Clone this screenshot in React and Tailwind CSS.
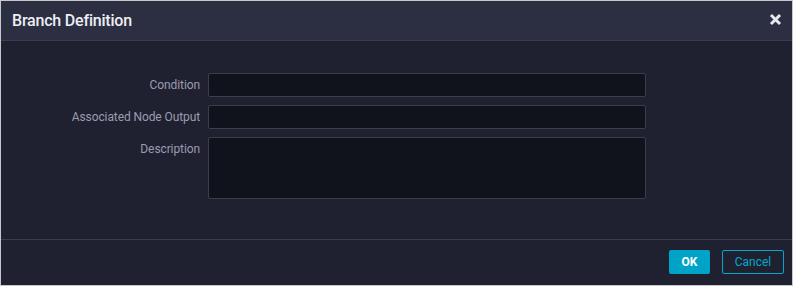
import React from "react";

export default function App() {
  return (
    <div className="w-[793px] h-[286px] border border-[#c8c8cc] bg-[#202130] flex flex-col" style={{ fontFamily: "Roboto, 'Liberation Sans', sans-serif" }}>
      <div className="h-[40px] shrink-0 bg-[#2c2f41] border-b border-[#3a3c50] flex items-center justify-between pl-[11px] pr-[10px]">
        <span className="text-[16px] font-medium text-[#eceef4] tracking-[-0.2px]">Branch Definition</span>
        <svg width="13" height="13" viewBox="0 0 13 13" className="mt-[-2px]">
          <path d="M2 2 L11 11 M11 2 L2 11" stroke="#e6e8f0" strokeWidth="3" strokeLinecap="butt" />
        </svg>
      </div>
      <div className="flex-1 flex flex-col gap-[8px] pt-[32px]">
        <div className="flex items-center gap-[8px]">
          <label className="w-[199px] text-right text-[12px] text-[#9a9cb0] tracking-[-0.1px]">Condition</label>
          <div className="w-[438px] h-[24px] bg-[#11131c] border border-[#3b3d51] rounded-[2px]" />
        </div>
        <div className="flex items-center gap-[8px]">
          <label className="w-[199px] text-right text-[12px] text-[#9a9cb0] tracking-[-0.1px]">Associated Node Output</label>
          <div className="w-[438px] h-[24px] bg-[#11131c] border border-[#3b3d51] rounded-[2px]" />
        </div>
        <div className="flex items-start gap-[8px]">
          <label className="w-[199px] text-right text-[12px] text-[#9a9cb0] tracking-[-0.1px] pt-[3px]">Description</label>
          <div className="w-[438px] h-[62px] bg-[#11131c] border border-[#3b3d51] rounded-[2px]" />
        </div>
      </div>
      <div className="h-[46px] shrink-0 border-t border-[#3a3c50] flex items-center justify-end gap-[12px] pr-[8px] pb-[1px]">
        <button className="w-[41px] h-[24px] bg-[#00a3c8] rounded-[2px] text-white text-[12px] font-bold">OK</button>
        <button className="w-[62px] h-[24px] border border-[#00a8cc] rounded-[2px] text-[#00a8cc] text-[12px]">Cancel</button>
      </div>
    </div>
  );
}
